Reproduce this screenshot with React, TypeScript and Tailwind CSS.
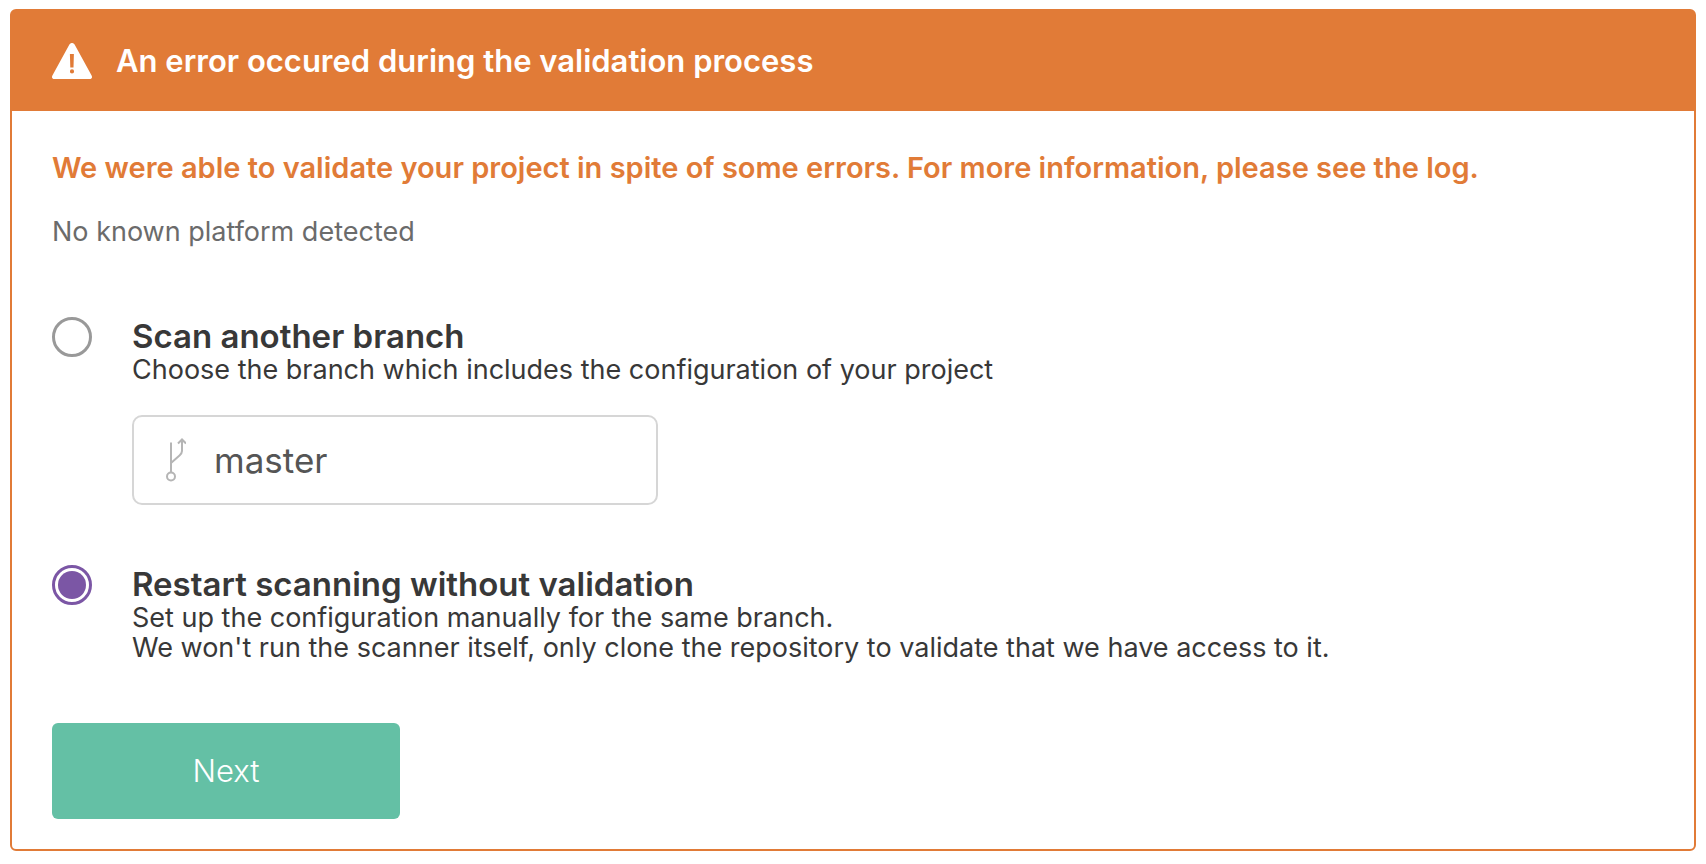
import { useState } from "react";

const radioClass =
  "m-0 size-10 shrink-0 cursor-pointer appearance-none rounded-full border-3 border-[#999999] bg-clip-content p-[3px] checked:border-[#7b56a5] checked:bg-[#7b56a5]";

function WarningIcon() {
  return (
    <svg width="40" height="36" viewBox="0 0 40 36" aria-hidden="true">
      <path
        fill="#fff"
        fillRule="evenodd"
        d="M17.4 1.4C18.6-.5 21.4-.5 22.6 1.4L39.6 32.6C40.6 34.4 39.7 36 37.6 36H2.4C.3 36-.6 34.4.4 32.6ZM17.9 11L18.3 24.6H21.5L21.9 11ZM20 26.3A2.1 2.1 0 1 0 20 30.5A2.1 2.1 0 1 0 20 26.3Z"
      />
    </svg>
  );
}

function BranchIcon() {
  return (
    <svg
      width="20"
      height="44"
      viewBox="0 0 20 44"
      fill="none"
      stroke="#b5b5b5"
      strokeWidth="2"
      aria-hidden="true"
    >
      <circle cx="5" cy="38.5" r="4" />
      <path d="M5 34.5V4.5M5 25L13.5 17.5C15.2 16 16 15 16 13V1.5M12 5.5L16 1.5L20 5.5" />
    </svg>
  );
}

export default function App() {
  const [choice, setChoice] = useState("restart");
  const [branch, setBranch] = useState("master");

  return (
    <div className="bg-white px-2.5 pt-[9px] pb-3 font-['Inter',sans-serif] text-[#383838]">
      <section className="rounded-md border-2 border-[#e17b37] bg-white">
        <header className="flex h-25 items-center gap-6 bg-[#e17b37] px-10 text-white">
          <WarningIcon />
          <h1 className="text-[31px] leading-[38px] font-semibold">
            An error occured during the validation process
          </h1>
        </header>

        <form className="px-10 pt-10 pb-[30px]" onSubmit={(e) => e.preventDefault()}>
          <h2 className="text-[29px] leading-[34px] font-semibold text-[#e17b37]">
            We were able to validate your project in spite of some errors. For more information,
            please see the log.
          </h2>
          <p className="mt-[30px] text-[27px] leading-[34px] text-[#6b6b6b]">
            No known platform detected
          </p>

          <div className="mt-17 flex gap-10">
            <input
              id="scan"
              type="radio"
              name="choice"
              className={radioClass}
              checked={choice === "scan"}
              onChange={() => setChoice("scan")}
            />
            <div>
              <label htmlFor="scan" className="block">
                <span className="block text-[33px] leading-[38px] font-semibold">
                  Scan another branch
                </span>
                <span className="block text-[27px] leading-[30px]">
                  Choose the branch which includes the configuration of your project
                </span>
              </label>
              <div className="mt-[30px] flex h-[90px] w-[526px] items-center gap-7 rounded-[10px] border-2 border-[#d6d6d6] px-8">
                <BranchIcon />
                <input
                  type="text"
                  aria-label="Branch"
                  className="min-w-0 flex-1 bg-transparent text-[35px] leading-[38px] text-[#555555] outline-none"
                  value={branch}
                  onChange={(e) => setBranch(e.target.value)}
                />
              </div>
            </div>
          </div>

          <div className="mt-15 flex gap-10">
            <input
              id="restart"
              type="radio"
              name="choice"
              className={radioClass}
              checked={choice === "restart"}
              onChange={() => setChoice("restart")}
            />
            <label htmlFor="restart" className="block">
              <span className="block text-[33px] leading-[38px] font-semibold">
                Restart scanning without validation
              </span>
              <span className="block text-[27px] leading-[30px]">
                Set up the configuration manually for the same branch.
                <br />
                We won't run the scanner itself, only clone the repository to validate that we have
                access to it.
              </span>
            </label>
          </div>

          <button
            type="submit"
            className="mt-15 block h-24 w-87 cursor-pointer rounded-md bg-[#64c0a5] text-[31px] leading-[38px] font-light text-white"
          >
            Next
          </button>
        </form>
      </section>
    </div>
  );
}
